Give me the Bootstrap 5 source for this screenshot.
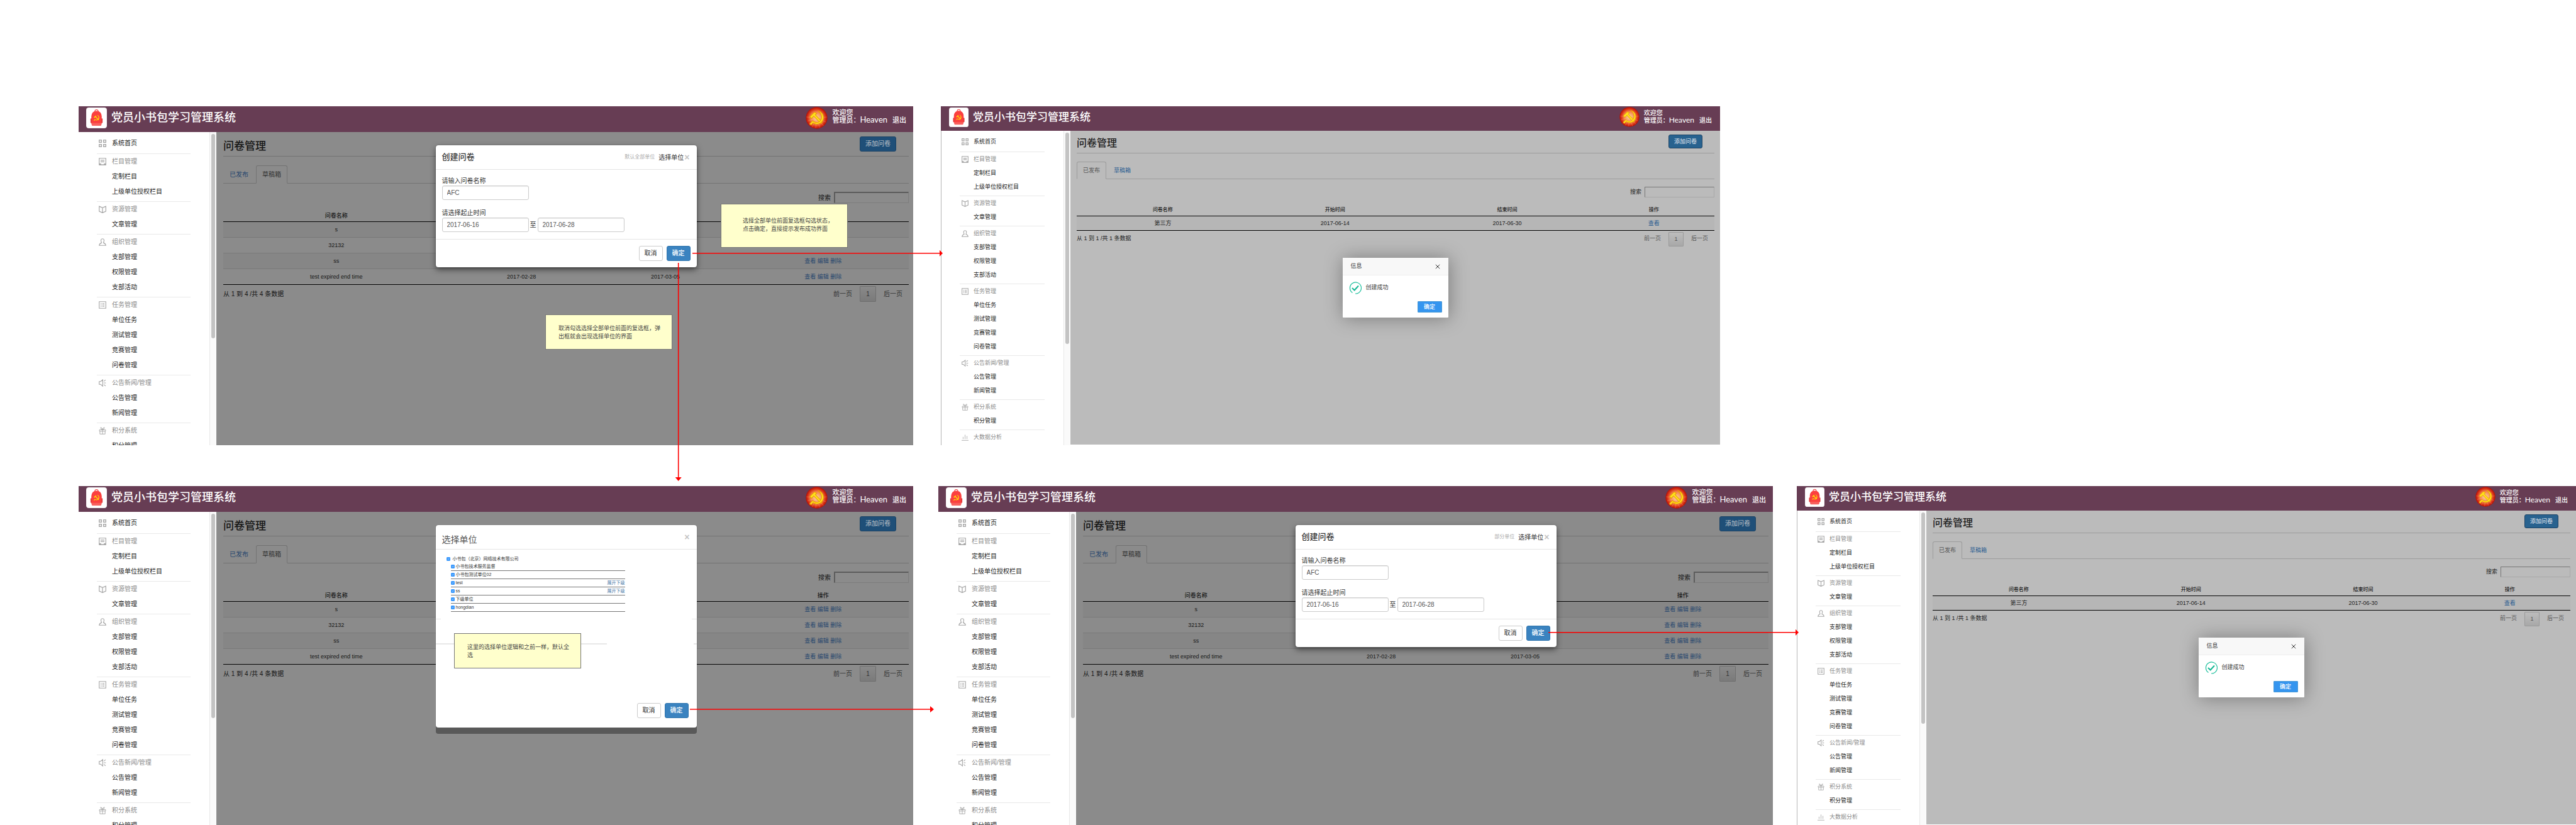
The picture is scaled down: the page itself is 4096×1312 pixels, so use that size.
<!DOCTYPE html>
<html lang="zh-CN">
<head>
<meta charset="utf-8">
<meta name="viewport" content="width=device-width, initial-scale=1">
<title>问卷管理流程</title>
<link href="https://cdn.jsdelivr.net/npm/bootstrap@5.3.0/dist/css/bootstrap.min.css" rel="stylesheet">
<style>
  body { font-family: "Liberation Sans", "Noto Sans CJK SC", sans-serif; color: #222; background: #fff; }
  .flow-page { height: 100vh; padding-top: 169px; gap: 65px; overflow: hidden; }
  .flow-row { flex: 1 1 0; min-height: 0; padding-left: 125px; }
  .row-top { gap: 44px; }
  .space-sm { width: 40px; }
  .space-xs { width: 38px; }

  /* one admin screen; "lg" and "sm" are its two scales */
  .screen { min-width: 0; flex: 1327 1 0; }
  .screen-sm { flex-grow: 1239; }
  .row-top .screen-rest { flex: 1317 1 0; }
  .screen {
    --fs: 10px; --td: 9px; --th: 9px; --line: 24px; --bar: 41px; --side: 219px; --brand: 18px; --logo: 33px;
    --h: 17px; --bg: #8b8b8b; --rule: #737373; --stripe: #868686; --link: #27476e; --ink: #161616; --dim: #333;
    --primary: #1f4f78; --primary-ink: #a9b4be; --emblem: 35px; --user: 11px; --name: 13px;
  }
  .screen-sm {
    --fs: 9px; --td: 9px; --th: 8px; --line: 22px; --bar: 39px; --side: 205px; --brand: 17px; --logo: 31px;
    --h: 16px; --bg: #bbb; --rule: #9c9c9c; --stripe: #b6b6b6; --link: #2b5d91; --ink: #222; --dim: #555;
    --primary: #28628f; --primary-ink: #cfdae3; --emblem: 32px; --user: 10px; --name: 12px;
  }
  .screen-sm .screen-body { border-left: 1px solid #b5b5b5; }
  .topbar { height: var(--bar); flex: none; background: #673d54; color: #fff; padding: 2px 11px 0 12px; }
  .screen-sm .topbar { padding-left: 13px; padding-right: 13px; }
  .brand-logo { width: var(--logo); height: var(--logo); }
  .brand-name { font-size: var(--brand); line-height: 32px; margin-left: 7px; font-weight: 500; }
  .emblem { width: var(--emblem); height: var(--emblem); margin-top: -1px; }
  .userbox { font-size: var(--user); line-height: 11px; margin: 3px 0 0 7px; font-weight: 500; }
  .userbox a { color: #fff; text-decoration: none; margin-left: 8px; }
  .userbox .uname { font-size: var(--name); font-family: Lato, sans-serif; font-weight: 400; }

  .side { width: var(--side); flex: none; background: #fff; overflow: hidden; }
  .side-nav { font-size: var(--fs); line-height: var(--line); padding: 6px 30px 0 29px; }
  .side-nav a { display: block; color: #222; text-decoration: none; padding-left: 24px; }
  .side-head { display: flex; align-items: center; color: #8b8b8b; padding-left: 3px; }
  .side-head svg { width: 12px; height: 12px; margin-right: 9px; flex: none; color: #a6a6a6; }
  .screen-sm .side-nav a { padding-left: 22px; }
  .screen-sm .side-head svg { width: 11px; height: 11px; margin-right: 8px; }
  .side-nav .side-head a, .screen-sm .side-nav .side-head a { padding-left: 0; }
  .side-group { border-top: 1px solid #e9e9e9; padding-bottom: 3px; }
  .side-home { padding-bottom: 4px; }
  .screen-sm .side-home { padding-bottom: 5px; }
  .track { width: 11px; background: #fafafa; border-left: 1px solid #e8e8e8; border-right: 1px solid #fff; padding: 3px 2px; }
  .thumb { width: 6px; height: 66%; border-radius: 3px; background: #c3c3c3; }
  .screen-sm .thumb { height: 68%; }

  .stage { background: var(--bg); color: var(--ink); padding: 0 7px 0 11px; min-width: 0; font-size: var(--fs); }
  .screen-sm .stage { padding: 0 9px 0 10px; margin-bottom: 1px; }
  .stage-head { height: 39px; border-bottom: 1px solid var(--rule); }
  .screen-sm .stage-head { height: 36px; }
  .stage-head h1 { font-size: var(--h); line-height: 20px; margin: 0; padding-bottom: 5px; font-weight: 500; align-self: flex-end; }
  .btn.btn-add { background: var(--primary); color: var(--primary-ink); font-size: var(--fs); font-weight: 500; line-height: 22px; padding: 0 8px; border: 1px solid #1d4466; border-radius: 3px; margin: 7px 20px 0 0; height: 24px; }
  .screen-sm .btn.btn-add { height: 22px; line-height: 20px; margin: 6px 19px 0 0; }
  .stage .nav-tabs { margin-top: 14px; border-bottom: 1px solid var(--rule); }
  .screen-sm .stage .nav-tabs { margin-top: 13px; }
  .stage .nav-link { padding: 0 9px; line-height: 27px; color: var(--link); border-radius: 3px 3px 0 0; margin-right: 2px; }
  .screen-sm .stage .nav-link { line-height: 26px; }
  .stage .nav-link.active { background: var(--bg); color: var(--dim); border-color: var(--rule) var(--rule) var(--bg); }
  .find { margin-top: 13px; }
  .screen-sm .find { margin-top: 12px; }
  .find input { width: 119px; height: 18px; margin-left: 5px; background: var(--bg); border: 1px solid #7d7d7d; border-top: 2px solid #5c5c5c; border-left: 2px solid #5c5c5c; padding: 0 4px; }
  .screen-sm .find input { width: 111px; height: 17px; border: 1px solid #a8a8a8; border-top-color: #777; border-left-color: #777; }
  .table.grid-list { --bs-table-bg: transparent; margin: 0; table-layout: fixed; text-align: center; font-size: var(--td); color: var(--ink); border-bottom: 0; }
  .grid-list > thead > tr > th { font-size: var(--th); font-weight: 500; height: 29px; line-height: 18px; padding: 6px 0 0; border-bottom: 1px solid #050505; color: var(--ink); }
  .grid-list > tbody > tr > td { height: 25px; line-height: 18px; padding: 0; border-bottom: 1px solid #797979; vertical-align: middle; color: var(--ink); }
  .grid-list > tbody > tr:nth-child(odd) { background: var(--stripe); }
  .grid-list > tbody > tr:last-child > td { border-bottom-color: #050505; }
  .screen-sm .grid-list > tbody > tr > td { height: 23px; }
  .grid-list a { color: var(--link); text-decoration: none; }
  .c1 { width: 33%; } .c2, .c3 { width: 21%; } .c4 { width: 25%; }
  .screen-sm .c1, .screen-sm .c2, .screen-sm .c3 { width: 27%; } .screen-sm .c4 { width: 19%; }
  .list-foot { margin-top: 2px; }
  .pager { gap: 12px; padding-right: 10px; }
  .pager a { color: var(--dim); text-decoration: none; }
  .pager .now { width: 26px; height: 25px; line-height: 23px; text-align: center; border: 1px solid #6f6f6f; background: linear-gradient(#898989, #7a7a7a); border-radius: 1px; }
  .screen-sm .pager .now { width: 24px; height: 23px; line-height: 21px; border-color: #9a9a9a; background: linear-gradient(#bcbcbc, #a8a8a8); }

  .veil { position: absolute; inset: 0; display: flex; justify-content: center; align-items: flex-start; padding: 21px 0 0 4px; }
  .veil-mid { align-items: center; padding: 0; }
  .dlg { width: 415px; background: #fff; border-radius: 4px; box-shadow: 0 4px 10px rgba(0,0,0,.5), 0 0 1px #333; color: #333; font-size: 10px; }
  .dlg-head { height: 39px; border-bottom: 1px solid #e5e5e5; padding: 0 11px 0 10px; }
  .dlg-head h2 { font-size: 13px; margin: 0; font-weight: 500; line-height: 20px; }
  .dlg-head .hint { color: #aaa; font-size: 8px; margin-right: 6px; }
  .dlg-head a { color: #333; text-decoration: none; }
  .x-btn { border: 0; background: none; padding: 0; margin-left: 1px; color: #c4c4c4; font-size: 14px; line-height: 14px; font-weight: 700; }
  .dlg-form { padding: 10px 10px 11px; line-height: 15px; }
  .dlg-form .form-control { width: 138px; height: 23px; padding: 0 7px; font-size: 10px; line-height: 21px; color: #555; border: 1px solid #ccc; border-radius: 3px; box-shadow: inset 0 1px 1px rgba(0,0,0,.08); }
  .dlg-form .field { margin-bottom: 13px; }
  .dlg-form .field:last-child { margin-bottom: 0; }
  .dlg-form label { display: block; }
  .date-row { gap: 2px; }
  .dlg-foot { border-top: 1px solid #e5e5e5; padding: 10px; gap: 6px; }
  .dlg .btn-act { font-size: 10px; line-height: 22px; height: 24px; width: 38px; padding: 0; border: 1px solid #ccc; border-radius: 3px; background: #fff; color: #333; }
  .dlg .btn-go { background: #3a83c0; border-color: #2f74ad; color: #fff; font-weight: 500; }
  .dlg-pick { box-shadow: 0 10px 0 #595959, 0 0 1px #333; }
  .dlg-pick .dlg-head h2 { font-size: 14px; color: #555; font-weight: 400; padding-top: 7px; }
  .tree { padding: 8px 114px 0 17px; font-size: 7px; line-height: 12px; }
  .tree-root { height: 13px; }
  .tree .form-check-input { width: 6px; height: 6px; margin: 0; border-radius: 1px; background-color: #3b99fc; border-color: #3b99fc; flex: none; }
  .tree-item { height: 13px; margin-left: 7px; border-bottom: 1px solid #777; }
  .tree-item label { margin-left: 2px; }
  .tree-root label { margin-left: 4px; }
  .tree-item a { color: #4a79a8; text-decoration: none; margin-left: auto; }
  .stub-row { margin-top: 11px; }
  .stub-row span { width: 8px; border-top: 1px solid #e5e5e5; }
  .band-row { margin-top: 38px; }
  .band-row span { width: 5px; border-top: 2px solid #e8e8e8; }
  .band-row .band-long { width: 272px; }
  .pick-foot { padding: 93px 13px 15px; gap: 6px; }

  .msg { width: 168px; background: #fff; border-radius: 1px; box-shadow: 1px 1px 30px rgba(0,0,0,.35); font-size: 9px; color: #333; }
  .msg-head { height: 28px; background: #f8f8f8; border-bottom: 1px solid #eee; padding: 0 13px; }
  .msg-head button { border: 0; background: none; padding: 0; line-height: 0; }
  .msg-head svg { width: 8px; height: 8px; }
  .msg-body { padding: 10px 10px 11px; }
  .msg-body svg { width: 20px; height: 20px; margin-right: 7px; }
  .msg-foot { padding: 0 10px 8px; }
  .msg-ok { width: 39px; height: 18px; padding: 0; border: 1px solid #4898d5; background: #3595ef; color: #fff; border-radius: 1px; font-size: 9px; line-height: 16px; font-weight: 500; }

  .memo { position: absolute; width: 202px; background: #ffffcc; border: 1px solid #777; color: #444; font-size: 9px; line-height: 13px; padding: 15px 18px 13px 20px; }
  .memo-a { left: 1021px; top: 155px; padding: 20px 18px 22px 34px; white-space: nowrap; }
  .memo-b { left: 742px; top: 331px; }
  .memo-c { left: 597px; top: 234px; }
  .wires { position: absolute; inset: 0; width: 100%; height: 100%; pointer-events: none; }
</style>
<script src="https://cdn.jsdelivr.net/npm/bootstrap@5.3.0/dist/js/bootstrap.bundle.min.js"></script>
</head>
<body>
<svg width="0" height="0" class="position-absolute" aria-hidden="true">
  <defs>
    <radialGradient id="glow"><stop offset="0" stop-color="#ffd9a0"/><stop offset=".55" stop-color="#f58348"/><stop offset=".82" stop-color="#da3418"/><stop offset="1" stop-color="#b30d05"/></radialGradient>
    <symbol id="party" viewBox="0 0 24 24">
      <path d="M3.5 10.5 9 5l3.2 1.2-1.9 1.9 8.900 9.200-1.900 1.800-8.900-9.300-2.700 2.900z"/>
      <path d="M13.500 3c5.500 1.200 8.700 7 6.300 12-2.300 4.600-8 6.200-12.300 3.300L5 21l-1.700-1.700 2.500-2.400 1.300-1.200c3 2.800 7.400 2.800 9.700-.4 2.800-3.800 1.300-9.200-3.300-12.300z"/>
    </symbol>
  </defs>
  <symbol id="i-bag" viewBox="0 0 48 48">
    <rect width="48" height="48" rx="6" fill="#fff" stroke="#d8ccd2" stroke-width=".6"/>
    <path d="M20 9.500q0-4.500 4-4.500t4 4.500" fill="none" stroke="#ef4140" stroke-width="1.600"/>
    <path d="M12 37V20Q13 8 24 8T36 20V37Z" fill="#fb403f"/>
    <rect x="10" y="25" width="3" height="11" rx="1.500" fill="#e33a3b"/><rect x="35" y="25" width="3" height="11" rx="1.500" fill="#e33a3b"/>
    <path d="M12 36H36L35 41Q34.500 42 33 42H15Q13.500 42 13 41Z" fill="#f8605e"/>
    <use href="#party" x="15" y="15" width="18" height="18" fill="#ffe500"/>
  </symbol>
  <symbol id="i-emblem" viewBox="0 0 48 48">
    <circle cx="24" cy="24" r="23.500" fill="url(#glow)"/>
    <g stroke="#ffc79a" stroke-width=".7" opacity=".6"><path d="M24 24 8 40M24 24 14 44M24 24 22 46M24 24 31 45M24 24 39 41M24 24 44 33M24 24 4 31M24 24 2 22M24 24 46 22"/></g>
    <use href="#party" x="3" y="3" width="42" height="42" fill="#ffe11c" stroke="#e79a08" stroke-width=".8"/>
  </symbol>
  <symbol id="i-grid" viewBox="0 0 16 16"><g fill="none" stroke="currentColor" stroke-width="1.800"><rect x="1" y="1" width="4.800" height="4.800"/><rect x="10.200" y="1" width="4.800" height="4.800"/><rect x="1" y="10.200" width="4.800" height="4.800"/><rect x="10.200" y="10.200" width="4.800" height="4.800"/></g></symbol>
  <symbol id="i-note" viewBox="0 0 16 16"><path d="M1 1H15V15H1ZM4 5.200H12M4 8.500H12" fill="none" stroke="currentColor" stroke-width="1.600"/><path d="M1 12H5V14H11V12H15V15.800H1Z" fill="currentColor"/></symbol>
  <symbol id="i-book" viewBox="0 0 16 16"><path d="M1 1.500 8 4.500 15 1.500V12L8 15 1 12ZM8 4.500V15" fill="none" stroke="currentColor" stroke-width="1.600"/></symbol>
  <symbol id="i-person" viewBox="0 0 16 16"><path d="M8 1C4.500 1 4.200 4 5.200 7L6 9.500Q1.500 11 1 15H15Q14.500 11 10 9.500L10.800 7C11.800 4 11.500 1 8 1Z" fill="none" stroke="currentColor" stroke-width="1.500"/></symbol>
  <symbol id="i-list" viewBox="0 0 16 16"><path d="M1 1H15V15H1Z" fill="none" stroke="currentColor" stroke-width="1.500"/><path d="M4 5H6M7.500 5H12M4 8H6M7.500 8H12M4 11H6M7.500 11H12" stroke="currentColor" stroke-width="1.500"/></symbol>
  <symbol id="i-horn" viewBox="0 0 16 16"><path d="M1 5H4L8.500 1.200V14.800L4 11H1ZM11 8H15M11.200 4.500 14.500 1.500M11.200 11.500 14.500 14.500" fill="none" stroke="currentColor" stroke-width="1.500"/></symbol>
  <symbol id="i-gift" viewBox="0 0 16 16"><path d="M1.500 6H14.500V9H1.500ZM2.500 9V15H13.500V9M8 6V15M8 6Q3 4 4 1 7 1 8 6 9 1 12 1 13 4 8 6" fill="none" stroke="currentColor" stroke-width="1.200"/></symbol>
  <symbol id="i-chart" viewBox="0 0 16 16"><path d="M3.500 7V12M8 2V12M12.500 5V12M0 15H16" fill="none" stroke="currentColor" stroke-width="1.200"/></symbol>
  <symbol id="i-x" viewBox="0 0 8 8"><path d="M.8.8 7.200 7.200M7.200.8.8 7.200" stroke="#333" stroke-width="1"/></symbol>
  <symbol id="i-ok" viewBox="0 0 20 20"><path d="M5.500 17.500A9 9 0 1 1 10 19" fill="none" stroke="#1cbf9c" stroke-width="1.200"/><path d="M5 10 8.700 13.500 15 6.500" fill="none" stroke="#12b894" stroke-width="2"/></symbol>
</svg>

<div class="flow-page position-relative d-flex flex-column">
  <div class="flow-row row-top d-flex">
    <section class="screen" data-kind="draft" data-id="s1" data-dialog="create" data-hint="默认全部单位"></section>
    <section class="screen screen-sm" data-kind="live" data-id="s2" data-dialog="done"></section>
    <div class="screen-rest"></div>
  </div>
  <div class="flow-row d-flex">
    <section class="screen" data-kind="draft" data-id="s3" data-dialog="pick"></section>
    <div class="space-sm flex-shrink-0"></div>
    <section class="screen" data-kind="draft" data-id="s4" data-dialog="create" data-hint="部分单位"></section>
    <div class="space-xs flex-shrink-0"></div>
    <section class="screen screen-sm" data-kind="live" data-id="s5" data-dialog="done"></section>
  </div>
  <svg class="wires" viewBox="0 0 4096 1312" aria-hidden="true">
    <g stroke="#f00" stroke-width="1.600" fill="none"><path d="M1101 402.700H1495M1078.700 418V760M1097 1128H1480M2462 1005.700H2856"/></g>
    <g fill="#f00"><path d="M1494 397.700 1499 402.700 1494 407.700ZM1073.700 759H1083.700L1078.700 765ZM1479 1123 1485 1128 1479 1133ZM2855 1000.700 2860 1005.700 2855 1010.700Z"/></g>
  </svg>
</div>

<script>
const menu = [
  ['note', '栏目管理', ['定制栏目', '上级单位授权栏目']],
  ['book', '资源管理', ['文章管理']],
  ['person', '组织管理', ['支部管理', '权限管理', '支部活动']],
  ['list', '任务管理', ['单位任务', '测试管理', '竞赛管理', '问卷管理']],
  ['horn', '公告新闻/管理', ['公告管理', '新闻管理']],
  ['gift', '积分系统', ['积分管理']],
  ['chart', '大数据分析', []]
];
const icon = (n, c = '') => `<svg class="${c}" aria-hidden="true"><use href="#i-${n}"/></svg>`;
const lists = {
  draft: [['s', '2017-06-16', '2017-06-28'], ['32132', '2017-06-16', '2017-06-28'], ['ss', '2017-06-16', '2017-06-28'], ['test expired end time', '2017-02-28', '2017-03-05']],
  live: [['第三方', '2017-06-14', '2017-06-30']]
};
const actions = { draft: ['查看', '编辑', '删除'], live: ['查看'] };

const topbar = () => `<header class="topbar d-flex align-items-start">
  ${icon('bag', 'brand-logo')}<div class="brand-name">党员小书包学习管理系统</div>
  ${icon('emblem', 'emblem ms-auto')}
  <div class="userbox"><div>欢迎您</div><div>管理员：<span class="uname">Heaven</span><a href="#">退出</a></div></div>
</header>`;

const side = () => `<aside class="side d-flex">
  <nav class="side-nav flex-grow-1">
    <div class="side-home"><div class="side-head">${icon('grid')}<a href="#">系统首页</a></div></div>
    ${menu.map(([i, t, kids]) => `<div class="side-group"><div class="side-head">${icon(i)}${t}</div>${kids.map(k => `<a href="#">${k}</a>`).join('')}</div>`).join('')}
  </nav>
  <div class="track"><div class="thumb"></div></div>
</aside>`;

const stage = (kind, id) => {
  const rows = lists[kind], n = rows.length, live = kind === 'live';
  return `<div class="stage-head d-flex justify-content-between align-items-start"><h1>问卷管理</h1><button type="button" class="btn btn-add">添加问卷</button></div>
  <ul class="nav nav-tabs">
    <li class="nav-item"><a class="nav-link ${live ? 'active' : ''}" href="#">已发布</a></li>
    <li class="nav-item"><a class="nav-link ${live ? '' : 'active'}" href="#">草稿箱</a></li>
  </ul>
  <div class="find d-flex justify-content-end align-items-center"><label for="${id}-find">搜索</label><input type="search" id="${id}-find"></div>
  <table class="table grid-list">
    <thead><tr><th class="c1">问卷名称</th><th class="c2">开始时间</th><th class="c3">结束时间</th><th class="c4">操作</th></tr></thead>
    <tbody>${rows.map(r => `<tr>${r.map(c => `<td>${c}</td>`).join('')}<td>${actions[kind].map(a => `<a href="#">${a}</a>`).join(' ')}</td></tr>`).join('')}</tbody>
  </table>
  <div class="list-foot d-flex justify-content-between align-items-center"><span>从 1 到 ${n} /共 ${n} 条数据</span>
    <div class="pager d-flex align-items-center"><a href="#">前一页</a><a href="#" class="now">1</a><a href="#">后一页</a></div></div>`;
};

const buttons = `<button type="button" class="btn btn-act">取消</button><button type="button" class="btn btn-act btn-go">确定</button>`;
const dialogs = {
  create: (id, hint) => `<div class="veil"><div class="dlg" role="dialog">
    <div class="dlg-head d-flex align-items-center"><h2 class="me-auto">创建问卷</h2><span class="hint">${hint}</span><a href="#">选择单位</a><button type="button" class="x-btn" aria-label="关闭">×</button></div>
    <div class="dlg-form">
      <div class="field"><label for="${id}-name">请输入问卷名称</label><input class="form-control" id="${id}-name" value="AFC"></div>
      <div class="field"><label for="${id}-from">请选择起止时间</label><div class="date-row d-flex align-items-center"><input class="form-control" id="${id}-from" value="2017-06-16"><span>至</span><input class="form-control" aria-label="结束时间" value="2017-06-28"></div></div>
    </div>
    <div class="dlg-foot d-flex justify-content-end">${buttons}</div></div></div>`,
  pick: id => {
    const units = [['小书包技术服务监督'], ['小书包测试单位02'], ['test', 1], ['ss', 1], ['下级单位'], ['hongdian']];
    return `<div class="veil"><div class="dlg dlg-pick" role="dialog">
    <div class="dlg-head d-flex align-items-center"><h2 class="me-auto">选择单位</h2><button type="button" class="x-btn" aria-label="关闭">×</button></div>
    <div class="tree">
      <div class="tree-root d-flex align-items-center"><input type="checkbox" class="form-check-input" id="${id}-root" checked><label for="${id}-root">小书包（北京）网络技术有限公司</label></div>
      ${units.map(([u, more], i) => `<div class="tree-item d-flex align-items-center"><input type="checkbox" class="form-check-input" id="${id}-u${i}" checked><label for="${id}-u${i}">${u}</label>${more ? '<a href="#">展开下级</a>' : ''}</div>`).join('')}
    </div>
    <div class="stub-row d-flex justify-content-between"><span></span><span></span></div>
    <div class="band-row d-flex justify-content-between"><span class="band-long"></span><span></span></div>
    <div class="pick-foot d-flex justify-content-end">${buttons}</div></div></div>`;
  },
  done: () => `<div class="veil veil-mid"><div class="msg" role="dialog">
    <div class="msg-head d-flex justify-content-between align-items-center"><span>信息</span><button type="button" aria-label="关闭">${icon('x')}</button></div>
    <div class="msg-body d-flex align-items-center">${icon('ok')}<span>创建成功</span></div>
    <div class="msg-foot d-flex justify-content-end"><button type="button" class="msg-ok">确定</button></div></div></div>`
};
const memos = {
  s1: `<div class="memo memo-a">选择全部单位前面复选框勾选状态，<br>点击确定，直接提示发布成功界面</div><div class="memo memo-b">取消勾选选择全部单位前面的复选框，弹出框就会出现选择单位的界面</div>`,
  s3: `<div class="memo memo-c">这里的选择单位逻辑和之前一样，默认全选</div>`
};

document.querySelectorAll('section.screen').forEach(el => {
  const { kind, id, dialog, hint } = el.dataset;
  el.classList.add('d-flex', 'flex-column', 'position-relative', 'overflow-hidden');
  el.innerHTML = topbar() + `<div class="screen-body d-flex flex-grow-1 overflow-hidden">${side()}
    <main class="stage flex-grow-1 position-relative">${stage(kind, id)}${dialogs[dialog](id, hint)}</main></div>${memos[id] || ''}`;
});
</script>
</body>
</html>
